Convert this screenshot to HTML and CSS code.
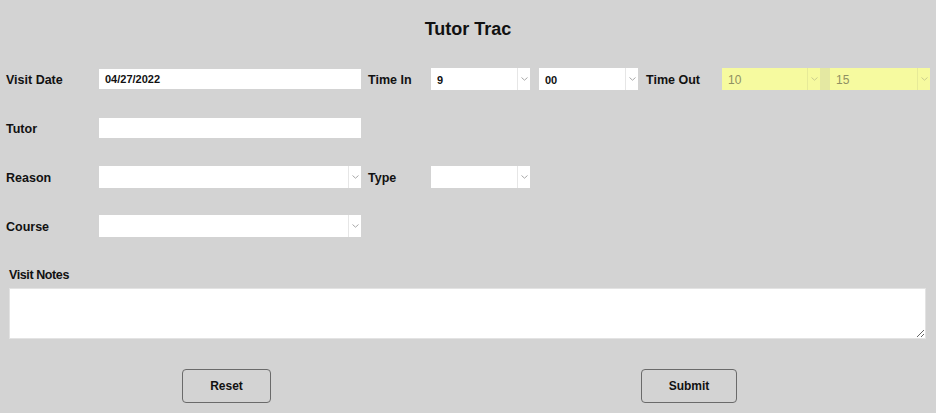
FILE: index.html
```html
<!DOCTYPE html>
<html>
<head>
<meta charset="utf-8">
<link rel="stylesheet" href="styles.css">
</head>
<body>
<h1 class="title">Tutor Trac</h1>
<form class="form">
  <div class="row">
    <label class="lbl lbl-main">Visit Date</label>
    <input class="field field-wide" type="text" value="04/27/2022">
    <label class="lbl lbl-mid">Time In</label>
    <div class="sel sel-sm"><select><option>9</option></select><span class="arrow"><svg width="7" height="4" viewBox="0 0 7 4"><path d="M0.5 0.5 L3.5 3.2 L6.5 0.5" fill="none" stroke="#a8a8a8" stroke-width="1"/></svg></span></div>
    <div class="sel sel-sm gap-9"><select><option>00</option></select><span class="arrow"><svg width="7" height="4" viewBox="0 0 7 4"><path d="M0.5 0.5 L3.5 3.2 L6.5 0.5" fill="none" stroke="#a8a8a8" stroke-width="1"/></svg></span></div>
    <label class="lbl lbl-out">Time Out</label>
    <div class="hilite">
      <div class="sel sel-y sel-y1"><select><option>10</option></select><span class="arrow"><svg width="7" height="4" viewBox="0 0 7 4"><path d="M0.5 0.5 L3.5 3.2 L6.5 0.5" fill="none" stroke="#c9cc8e" stroke-width="1"/></svg></span></div>
      <div class="sel sel-y sel-y2"><select><option>15</option></select><span class="arrow"><svg width="7" height="4" viewBox="0 0 7 4"><path d="M0.5 0.5 L3.5 3.2 L6.5 0.5" fill="none" stroke="#c9cc8e" stroke-width="1"/></svg></span></div>
    </div>
  </div>
  <div class="row">
    <label class="lbl lbl-main">Tutor</label>
    <input class="field field-wide" type="text" value="">
  </div>
  <div class="row">
    <label class="lbl lbl-main">Reason</label>
    <div class="sel sel-wide"><select><option></option></select><span class="arrow"><svg width="7" height="4" viewBox="0 0 7 4"><path d="M0.5 0.5 L3.5 3.2 L6.5 0.5" fill="none" stroke="#a8a8a8" stroke-width="1"/></svg></span></div>
    <label class="lbl lbl-mid">Type</label>
    <div class="sel sel-sm"><select><option></option></select><span class="arrow"><svg width="7" height="4" viewBox="0 0 7 4"><path d="M0.5 0.5 L3.5 3.2 L6.5 0.5" fill="none" stroke="#a8a8a8" stroke-width="1"/></svg></span></div>
  </div>
  <div class="row">
    <label class="lbl lbl-main">Course</label>
    <div class="sel sel-wide"><select><option></option></select><span class="arrow"><svg width="7" height="4" viewBox="0 0 7 4"><path d="M0.5 0.5 L3.5 3.2 L6.5 0.5" fill="none" stroke="#a8a8a8" stroke-width="1"/></svg></span></div>
  </div>
  <div class="notes">
    <label class="notes-lbl">Visit Notes</label>
    <textarea class="notes-area"></textarea>
  </div>
  <div class="buttons">
    <button type="button" class="btn btn-reset">Reset</button>
    <button type="button" class="btn btn-submit">Submit</button>
  </div>
</form>
</body>
</html>
```
FILE: styles.css
```css
html, body {
  margin: 0;
  padding: 0;
  background: #d3d3d3;
  font-family: "Liberation Sans", Arial, sans-serif;
  color: #111;
}
.title {
  margin: 0;
  padding-top: 18px;
  font-size: 18px;
  line-height: 22px;
  font-weight: bold;
  text-align: center;
}
.form {
  padding-left: 6px;
  display: flex;
  flex-direction: column;
}
.row {
  display: flex;
  align-items: center;
  height: 24px;
  margin-top: 25px;
}
.row:first-child {
  margin-top: 27px;
}
.lbl {
  font-weight: bold;
  font-size: 12.5px;
  line-height: 16px;
  padding-top: 1px;
}
.lbl-main { width: 93px; }
.lbl-mid { width: 63px; margin-left: 7px; }
.lbl-out { width: 76px; margin-left: 8px; }
.field {
  box-sizing: border-box;
  border: none;
  outline: none;
  background: #fff;
  height: 20px;
  padding: 0 6px;
  font-family: "Liberation Sans", Arial, sans-serif;
  font-weight: bold;
  font-size: 11px;
  color: #111;
}
.field-wide { width: 262px; }
.sel {
  position: relative;
  height: 22px;
  background: #fff;
  box-sizing: border-box;
}
.sel select {
  -webkit-appearance: none;
  appearance: none;
  border: none;
  outline: none;
  background: transparent;
  width: 100%;
  height: 100%;
  padding: 2px 0 0 6px;
  margin: 0;
  font-family: "Liberation Sans", Arial, sans-serif;
  font-weight: bold;
  font-size: 11px;
  color: #111;
}
.sel .arrow {
  position: absolute;
  top: 0;
  right: 0;
  width: 12px;
  height: 100%;
  border-left: 1px solid #e6e6e6;
  display: flex;
  align-items: center;
  justify-content: center;
}
.sel-sm { width: 99px; }
.sel-wide { width: 262px; }
.gap-9 { margin-left: 9px; }
.hilite {
  display: flex;
  background: #e4e8a2;
  height: 22px;
  width: 208px;
}
.sel-y {
  background: #f6fa9f;
}
.sel-y select {
  color: #8f9062;
  font-weight: normal;
  font-size: 12px;
}
.sel-y .arrow {
  border-left: 1px solid #e6ea98;
}
.sel-y1 { width: 98px; }
.sel-y2 { width: 100px; margin-left: 10px; }
.notes {
  display: flex;
  flex-direction: column;
  margin-top: 28px;
  padding-left: 3px;
}
.notes-lbl {
  font-weight: bold;
  font-size: 12.5px;
  line-height: 16px;
  letter-spacing: -0.4px;
  padding-top: 1px;
}
.notes-area {
  box-sizing: border-box;
  margin-top: 5px;
  width: 917px;
  height: 51px;
  border: 1px solid #e3e3e3;
  background: #fff;
  outline: none;
  padding: 2px;
}
.buttons {
  display: flex;
  margin-top: 30px;
}
.btn {
  box-sizing: border-box;
  height: 34px;
  border: 1px solid #6a6a6a;
  border-radius: 4px;
  background: transparent;
  font-family: "Liberation Sans", Arial, sans-serif;
  font-weight: bold;
  font-size: 12px;
  color: #111;
  padding: 0;
}
.btn-reset { width: 89px; margin-left: 176px; }
.btn-submit { width: 96px; margin-left: 370px; }
```
